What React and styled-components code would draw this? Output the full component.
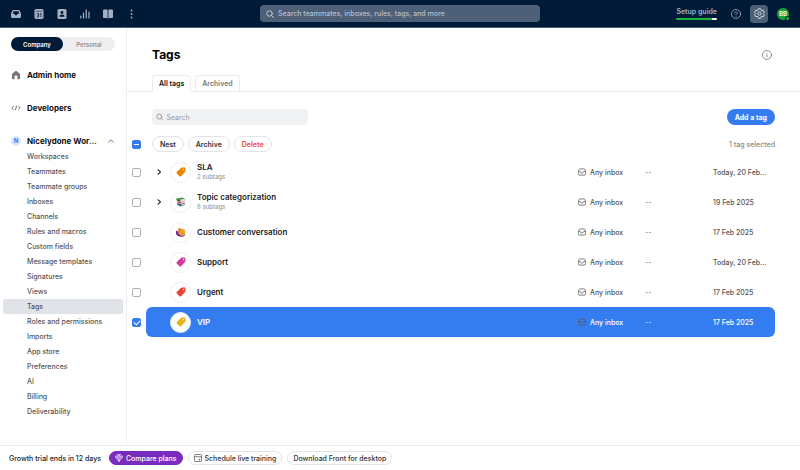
import React, { useState } from "react";
import styled, { createGlobalStyle, css } from "styled-components";

const GlobalStyle = createGlobalStyle`
  * {
    box-sizing: border-box;
  }
  body {
    margin: 0;
    font-family: Inter, "Liberation Sans", sans-serif;
    font-size: 8px;
    color: #222;
    background: #fff;
  }
  button, input {
    font-family: inherit;
    margin: 0;
  }
  button {
    cursor: pointer;
  }
`;

const menuItems = [
  "Workspaces",
  "Teammates",
  "Teammate groups",
  "Inboxes",
  "Channels",
  "Rules and macros",
  "Custom fields",
  "Message templates",
  "Signatures",
  "Views",
  "Tags",
  "Roles and permissions",
  "Imports",
  "App store",
  "Preferences",
  "AI",
  "Billing",
  "Deliverability",
];

const tags = [
  { name: "SLA", subtags: 2, color: "#f08000", date: "Today, 20 Feb…" },
  { name: "Topic categorization", subtags: 8, icon: "books", date: "19 Feb 2025" },
  { name: "Customer conversation", icon: "hand", date: "17 Feb 2025" },
  { name: "Support", color: "#cf3a9b", date: "Today, 20 Feb…" },
  { name: "Urgent", color: "#ea4335", date: "17 Feb 2025" },
  { name: "VIP", color: "#e3b21c", date: "17 Feb 2025" },
];

function InboxSolidIcon() {
  return (
    <svg width="10" height="10" viewBox="0 0 20 20" fill="#a5b1c0" aria-hidden="true">
      <path
        fillRule="evenodd"
        d="M5 2h10a3 3 0 0 1 2.500 1.500L20 9v6a3 3 0 0 1-3 3H3a3 3 0 0 1-3-3V9l2.500-5.500A3 3 0 0 1 5 2Zm0 2.500L3 9h3.500c.4 2.200 1.700 3.500 3.500 3.500s3.100-1.300 3.500-3.500H17l-2-4.500Z"
      />
    </svg>
  );
}

function CalendarSolidIcon() {
  return (
    <svg width="10" height="10" viewBox="0 0 20 20" aria-hidden="true">
      <rect x="1" y="0" width="18" height="20" rx="3" fill="#a5b1c0" />
      <path d="M3.500 4.500h13" stroke="#001b38" strokeWidth="1.200" />
      <path
        d="M5.500 9h3.700v7H5.500M6.500 12.500h2.700M12 10l2-1v7.500"
        fill="none"
        stroke="#001b38"
        strokeWidth="1.500"
      />
    </svg>
  );
}

function ContactIcon() {
  return (
    <svg width="10" height="10" viewBox="0 0 20 20" aria-hidden="true">
      <rect x="1" y="0" width="18" height="20" rx="3" fill="#a5b1c0" />
      <circle cx="10" cy="7" r="2.800" fill="#001b38" />
      <path d="M5 15.500c0-3 2-4.500 5-4.500s5 1.500 5 4.500Z" fill="#001b38" />
    </svg>
  );
}

function ChartIcon() {
  return (
    <svg width="10" height="10" viewBox="0 0 20 20" aria-hidden="true">
      <path
        d="M1.500 18v-4M7 18V8M12.500 18V1.500M18 18V6"
        stroke="#a5b1c0"
        strokeWidth="2.400"
        strokeLinecap="round"
      />
    </svg>
  );
}

function BookIcon() {
  return (
    <svg width="10" height="10" viewBox="0 0 20 20" fill="#a5b1c0" aria-hidden="true">
      <path d="M2 1h5.500A1.500 1.500 0 0 1 9.200 2.500V19L7 18H2a2 2 0 0 1-2-2V3a2 2 0 0 1 2-2ZM18 1h-5.500a1.500 1.500 0 0 0-1.700 1.500V19l2.200-1h5a2 2 0 0 0 2-2V3a2 2 0 0 0-2-2Z" />
    </svg>
  );
}

function DotsIcon() {
  return (
    <svg width="10" height="10" viewBox="0 0 20 20" fill="#a5b1c0" aria-hidden="true">
      <circle cx="11" cy="3" r="1.800" />
      <circle cx="11" cy="10" r="1.800" />
      <circle cx="11" cy="17" r="1.800" />
    </svg>
  );
}

function SearchIcon() {
  return (
    <svg
      width="8"
      height="8"
      viewBox="0 0 16 16"
      fill="none"
      stroke="currentColor"
      strokeWidth="1.700"
      strokeLinecap="round"
      aria-hidden="true"
    >
      <circle cx="7" cy="7" r="5.500" />
      <path d="m11 11 4 4" />
    </svg>
  );
}

function HelpIcon() {
  return (
    <svg
      width="10"
      height="10"
      viewBox="0 0 20 20"
      fill="none"
      stroke="#a5b1c0"
      strokeWidth="1.600"
      strokeLinecap="round"
      aria-hidden="true"
    >
      <circle cx="10" cy="10" r="9" />
      <path d="M7.500 8c0-3.500 5-3.500 5-.2 0 1.900-2.500 2-2.500 4M10 14.600v.2" />
    </svg>
  );
}

function GearIcon() {
  return (
    <svg
      width="11"
      height="11"
      viewBox="0 0 22 22"
      fill="none"
      stroke="#d3d9e0"
      strokeWidth="1.900"
      strokeLinejoin="round"
      aria-hidden="true"
    >
      <path d="M8.800 1.500h4.400l.8 2.700 1.900 1.100 2.700-.7 2.200 3.800-2 2v1.200l2 2-2.200 3.800-2.700-.7-1.900 1.100-.8 2.700H8.800L8 17.800l-1.900-1.100-2.700.7-2.200-3.800 2-2v-1.200l-2-2 2.200-3.800 2.700.7L8 4.200Z" />
      <circle cx="11" cy="11" r="3.200" />
    </svg>
  );
}

function HomeIcon() {
  return (
    <svg width="10" height="10" viewBox="0 0 20 20" fill="#757575" aria-hidden="true">
      <path d="M9 2a1.500 1.500 0 0 1 2 0l6.300 5.300a2 2 0 0 1 .7 1.500v8a1.500 1.500 0 0 1-1.500 1.500H13v-5a3 3 0 0 0-6 0v5H3.500A1.500 1.500 0 0 1 2 16.800v-8a2 2 0 0 1 .7-1.500Z" />
    </svg>
  );
}

function CodeIcon() {
  return (
    <svg
      width="10"
      height="10"
      viewBox="0 0 20 20"
      fill="none"
      stroke="#666"
      strokeWidth="1.700"
      strokeLinecap="round"
      strokeLinejoin="round"
      aria-hidden="true"
    >
      <path d="M5 6.500 1.500 10 5 13.500M15 6.500l3.500 3.500-3.500 3.500M11.500 6 8.500 14" />
    </svg>
  );
}

function ChevronIcon({ up }) {
  return (
    <svg
      width="8"
      height="8"
      viewBox="0 0 16 16"
      fill="none"
      stroke={up ? "#666" : "#333"}
      strokeWidth={up ? 1.800 : 2.200}
      strokeLinecap="round"
      strokeLinejoin="round"
      aria-hidden="true"
    >
      <path d={up ? "m3 10.500 5-5 5 5" : "m6 3.500 5 4.500L6 12.500"} />
    </svg>
  );
}

function InfoIcon() {
  return (
    <svg
      width="10"
      height="10"
      viewBox="0 0 20 20"
      fill="none"
      stroke="#777"
      strokeWidth="1.600"
      strokeLinecap="round"
      aria-hidden="true"
    >
      <circle cx="10" cy="10" r="9" />
      <path d="M10 9.500V14M10 6v.2" />
    </svg>
  );
}

function InboxIcon() {
  return (
    <svg
      width="8"
      height="8"
      viewBox="0 0 16 16"
      fill="none"
      stroke="#555"
      strokeWidth="1.500"
      strokeLinejoin="round"
      aria-hidden="true"
    >
      <path d="M4 1.800h8a2 2 0 0 1 1.800 1.300L15.200 7v4.500a2.700 2.700 0 0 1-2.700 2.700h-9A2.700 2.700 0 0 1 .8 11.500V7l1.400-3.900A2 2 0 0 1 4 1.800Z" />
      <path d="M1 7h3.500c.3 2 1.500 3 3.500 3s3.200-1 3.500-3H15" />
    </svg>
  );
}

function TagIcon({ color }) {
  return (
    <svg width="10" height="10" viewBox="0 0 20 20" fill={color} aria-hidden="true">
      <path
        fillRule="evenodd"
        d="M11.500 1.200 17.300 1a1.700 1.700 0 0 1 1.700 1.700l-.2 5.800a2.500 2.500 0 0 1-.7 1.700l-8 8.200a2.200 2.200 0 0 1-3.100 0l-5.400-5.400a2.200 2.200 0 0 1 0-3.100l8.200-8a2.500 2.500 0 0 1 1.700-.7ZM15 3.500a1.500 1.500 0 1 0 0 3 1.500 1.500 0 0 0 0-3Z"
      />
    </svg>
  );
}

function BooksIcon() {
  return (
    <svg width="10" height="10" viewBox="0 0 20 20" aria-hidden="true">
      <path d="m1 3 11-2 7 2-10 3Z" fill="#4a9a43" />
      <path d="M1 3v4l8 2V6Z" fill="#236b2b" />
      <path d="m9 6 10-3v3L9 9Z" fill="#d9dfd0" />
      <path d="m3 8 7 1.500L18 7v3l-8 3-7-2Z" fill="#c73832" />
      <path d="m10 9.500 8-2.300V10l-8 2Z" fill="#e6dedb" />
      <path d="m2 12 8 2 8-3v4l-8 4-7-3Z" fill="#3b5068" />
      <path d="m10 15 8-3v2l-8 3.500Z" fill="#d5dce1" />
    </svg>
  );
}

function HandIcon() {
  return (
    <svg width="10" height="10" viewBox="0 0 20 20" aria-hidden="true">
      <path d="M0 7c-1 5 0 9 4 11 4.500 2.500 11 2 14-1L8 11Z" fill="#7b2299" />
      <circle cx="12" cy="10" r="6.500" fill="#f0a933" />
      <path
        d="M4 5c1-3 3-4 4-3l4 3c1 2-3 9-5 9s-4-6-3-9Z"
        fill="#e39a35"
      />
      <path d="M7 14c4 3 8 3 11 0" stroke="#e29a35" strokeWidth="3" fill="none" />
      <path
        d="M11 8.500h1M15 8.500h1M11.500 11.500c1.500 1 3 1 4 0M6 4l2 4"
        stroke="#9a5a1c"
        strokeWidth="1"
        fill="none"
      />
    </svg>
  );
}

function DiamondIcon() {
  return (
    <svg
      width="8"
      height="8"
      viewBox="0 0 16 16"
      fill="none"
      stroke="#fff"
      strokeWidth="1.300"
      strokeLinejoin="round"
      aria-hidden="true"
    >
      <path d="M4 1.500h8L15.300 6 8 15 .7 6ZM.7 6h14.600M5.300 6 8 15l2.700-9M5.300 6 8 1.500 10.700 6" />
    </svg>
  );
}

function CalendarIcon() {
  return (
    <svg
      width="8"
      height="8"
      viewBox="0 0 16 16"
      fill="none"
      stroke="#444"
      strokeWidth="1.400"
      aria-hidden="true"
    >
      <rect x="1" y="1" width="14" height="14" rx="2" />
      <path d="M1 5.500h14M10 10.500h1.500V12H10Z" />
    </svg>
  );
}

function App() {
  const [selected, setSelected] = useState(["VIP"]);
  const [search, setSearch] = useState("");

  const toggleTag = (name) => {
    setSelected((prev) =>
      prev.includes(name) ? prev.filter((n) => n !== name) : [...prev, name]
    );
  };

  const toggleAll = () => {
    setSelected(selected.length ? [] : tags.map((tag) => tag.name));
  };

  return (
    <Page>
      <GlobalStyle />
      <TopBar>
        <TopNav>
          <TopButton aria-label="Inbox"><InboxSolidIcon /></TopButton>
          <TopButton aria-label="Calendar"><CalendarSolidIcon /></TopButton>
          <TopButton aria-label="Contacts"><ContactIcon /></TopButton>
          <TopButton aria-label="Analytics"><ChartIcon /></TopButton>
          <TopButton aria-label="Knowledge base"><BookIcon /></TopButton>
          <TopButton aria-label="More"><DotsIcon /></TopButton>
        </TopNav>
        <TopSearch>
          <SearchIcon />
          <input
            aria-label="Search everything"
            placeholder="Search teammates, inboxes, rules, tags, and more"
          />
        </TopSearch>
        <TopActions>
          <SetupGuide href="#setup">
            Setup guide
            <SetupProgress />
          </SetupGuide>
          <TopButton aria-label="Help"><HelpIcon /></TopButton>
          <TopButton $active aria-label="Settings"><GearIcon /></TopButton>
          <Avatar>
            BB
            <Status />
          </Avatar>
        </TopActions>
      </TopBar>

      <Body>
        <Sidebar>
          <Switcher>
            <SwitchButton $active>Company</SwitchButton>
            <SwitchButton>Personal</SwitchButton>
          </Switcher>
          <SideSection href="#home">
            <HomeIcon />
            <span>Admin home</span>
          </SideSection>
          <SideSection href="#developers">
            <CodeIcon />
            <span>Developers</span>
          </SideSection>
          <SideSection href="#workspace">
            <WorkspaceBadge>N</WorkspaceBadge>
            <span>Nicelydone Wor…</span>
            <ChevronIcon up />
          </SideSection>
          <Menu>
            {menuItems.map((item) => (
              <MenuLink key={item} href="#menu" $active={item === "Tags"}>
                {item}
              </MenuLink>
            ))}
          </Menu>
        </Sidebar>

        <Main>
          <Header>
            <Title>Tags</Title>
            <IconButton aria-label="About tags"><InfoIcon /></IconButton>
          </Header>
          <Tabs>
            <Tab $active>All tags</Tab>
            <Tab>Archived</Tab>
          </Tabs>
          <Toolbar>
            <TagSearch>
              <SearchIcon />
              <input
                aria-label="Search tags"
                placeholder="Search"
                value={search}
                onChange={(e) => setSearch(e.target.value)}
              />
            </TagSearch>
            <AddButton>Add a tag</AddButton>
          </Toolbar>
          <BulkBar>
            <Checkbox
              type="checkbox"
              aria-label="Select all tags"
              $mixed={selected.length > 0}
              checked={selected.length > 0}
              onChange={toggleAll}
            />
            <BulkActions>
              <PillButton>Nest</PillButton>
              <PillButton>Archive</PillButton>
              <PillButton $danger>Delete</PillButton>
            </BulkActions>
            <SelectedCount>
              {selected.length} {selected.length === 1 ? "tag" : "tags"} selected
            </SelectedCount>
          </BulkBar>
          <TagList>
            {tags
              .filter((tag) => tag.name.toLowerCase().includes(search.toLowerCase()))
              .map((tag) => {
                const isSelected = selected.includes(tag.name);
                return (
                  <TagItem key={tag.name}>
                    <Checkbox
                      type="checkbox"
                      aria-label={tag.name}
                      checked={isSelected}
                      onChange={() => toggleTag(tag.name)}
                    />
                    <TagRow $selected={isSelected}>
                      <Expander>
                        {tag.subtags && (
                          <IconButton aria-label={`Expand ${tag.name}`}>
                            <ChevronIcon />
                          </IconButton>
                        )}
                      </Expander>
                      <TagCircle>
                        {tag.icon === "books" && <BooksIcon />}
                        {tag.icon === "hand" && <HandIcon />}
                        {tag.color && <TagIcon color={tag.color} />}
                      </TagCircle>
                      <TagName $selected={isSelected}>
                        {tag.name}
                        {tag.subtags && <small>{tag.subtags} subtags</small>}
                      </TagName>
                      <InboxCell>
                        <InboxIcon />
                        Any inbox
                      </InboxCell>
                      <MutedCell>--</MutedCell>
                      <DateCell>{tag.date}</DateCell>
                    </TagRow>
                  </TagItem>
                );
              })}
          </TagList>
        </Main>
      </Body>

      <Footer>
        <TrialText>Growth trial ends in 12 days</TrialText>
        <FooterButton $primary>
          <DiamondIcon />
          Compare plans
        </FooterButton>
        <FooterButton>
          <CalendarIcon />
          Schedule live training
        </FooterButton>
        <FooterButton>Download Front for desktop</FooterButton>
      </Footer>
    </Page>
  );
}

const Page = styled.div`
  min-height: 100vh;
  display: flex;
  flex-direction: column;
`;

const TopBar = styled.header`
  display: grid;
  grid-template-columns: 1fr 35vw 1fr;
  align-items: center;
  height: 28px;
  padding: 0 7px;
  background: #001b38;
  border-bottom: 1px solid #4d6078;
`;

const TopNav = styled.nav`
  display: flex;
  gap: 5px;
`;

const TopButton = styled.button`
  display: flex;
  align-items: center;
  justify-content: center;
  width: 18px;
  height: 18px;
  padding: 0;
  border: none;
  border-radius: 4px;
  background: ${({ $active }) => ($active ? "#4d6078" : "transparent")};
`;

const TopSearch = styled.label`
  display: flex;
  align-items: center;
  gap: 4px;
  height: 17px;
  padding: 0 6px;
  border-radius: 4px;
  background: #4d6078;
  color: #d3d9e0;

  input {
    flex: 1;
    padding: 0;
    border: none;
    outline: none;
    background: transparent;
    font-size: 7px;
    font-weight: 500;
    color: #fff;
  }
  input::placeholder {
    color: #b4becb;
  }
`;

const TopActions = styled.div`
  display: flex;
  align-items: center;
  justify-content: flex-end;
  gap: 5px;
  padding-right: 4px;
`;

const SetupGuide = styled.a`
  margin-right: 5px;
  font-size: 7px;
  font-weight: 600;
  line-height: 10px;
  color: #a5b1c0;
  text-decoration: none;
`;

const SetupProgress = styled.div`
  height: 2px;
  margin-top: 1px;
  border-radius: 1px;
  background: linear-gradient(to right, #16b53c 88%, #fff 88%);
`;

const Avatar = styled.div`
  position: relative;
  display: flex;
  align-items: center;
  justify-content: center;
  width: 12px;
  height: 12px;
  margin-left: 4px;
  border-radius: 50%;
  background: #16a53c;
  color: #fff;
  font-size: 6px;
  font-weight: 600;
`;

const Status = styled.span`
  position: absolute;
  right: -1px;
  bottom: -1px;
  width: 5px;
  height: 5px;
  border: 1px solid #001b38;
  border-radius: 50%;
  background: #16b53c;
`;

const Body = styled.div`
  flex: 1;
  display: flex;
`;

const Sidebar = styled.aside`
  width: 127px;
  flex-shrink: 0;
  padding: 9px 3px 0;
  border-right: 1px solid #ededf0;
`;

const Switcher = styled.div`
  display: flex;
  height: 14px;
  margin: 0 8px 9px;
  border-radius: 7px;
  background: #efeff1;
`;

const SwitchButton = styled.button`
  flex: 1;
  padding: 0;
  border: none;
  border-radius: 7px;
  font-size: 6px;
  font-weight: 600;
  background: ${({ $active }) => ($active ? "#001b38" : "transparent")};
  color: ${({ $active }) => ($active ? "#fff" : "#8e8e90")};
`;

const SideSection = styled.a`
  display: flex;
  align-items: center;
  gap: 6px;
  height: 29px;
  margin-bottom: 4px;
  padding: 0 8px;
  font-size: 8px;
  font-weight: 700;
  color: #111;
  text-decoration: none;

  span {
    flex: 1;
    white-space: nowrap;
  }
  svg {
    flex-shrink: 0;
  }
`;

const WorkspaceBadge = styled.div`
  display: flex;
  align-items: center;
  justify-content: center;
  width: 10px;
  height: 10px;
  border-radius: 50%;
  background: #d5e6ff;
  color: #3b7ff0;
  font-size: 6px;
`;

const Menu = styled.nav`
  display: flex;
  flex-direction: column;
  margin-top: -10px;
`;

const MenuLink = styled.a`
  padding-left: 24px;
  border-radius: 2px;
  font-size: 7px;
  font-weight: 500;
  line-height: 15px;
  color: #555;
  text-decoration: none;
  background: ${({ $active }) => ($active ? "#e0e3e8" : "transparent")};
`;

const Main = styled.main`
  flex: 1;
  min-width: 0;
`;

const Header = styled.div`
  display: flex;
  align-items: center;
  justify-content: space-between;
  padding: 17px 27px 0 25px;
`;

const Title = styled.h1`
  margin: 0;
  font-size: 12px;
  line-height: 20px;
  font-weight: 700;
  color: #000;
`;

const IconButton = styled.button`
  display: flex;
  padding: 1px;
  border: none;
  background: transparent;
`;

const Tabs = styled.div`
  display: flex;
  gap: 4px;
  height: 27px;
  padding: 10px 25px 0;
  border-bottom: 1px solid #ececee;
`;

const Tab = styled.button`
  height: 16px;
  padding: 0 6px;
  border: 1px solid #ececee;
  border-bottom: none;
  border-radius: 4px 4px 0 0;
  background: #fff;
  font-size: 7px;
  font-weight: 600;
  color: #777;
  ${({ $active }) =>
    $active &&
    css`
      height: 17px;
      padding-bottom: 1px;
      color: #111;
    `}
`;

const Toolbar = styled.div`
  display: flex;
  align-items: center;
  justify-content: space-between;
  padding: 17px 25px 0;
`;

const TagSearch = styled.label`
  display: flex;
  align-items: center;
  gap: 3px;
  width: 25%;
  height: 16px;
  padding: 0 4px;
  border-radius: 4px;
  background: #f1f2f4;
  color: #888;

  input {
    width: 100%;
    padding: 0;
    border: none;
    outline: none;
    background: transparent;
    font-size: 7px;
  }
  input::placeholder {
    color: #999;
  }
`;

const AddButton = styled.button`
  height: 16px;
  padding: 0 8px;
  border: none;
  border-radius: 8px;
  background: #347df0;
  color: #fff;
  font-size: 7px;
  font-weight: 700;
`;

const Checkbox = styled.input`
  appearance: none;
  flex-shrink: 0;
  display: grid;
  place-items: center;
  width: 9px;
  height: 9px;
  border: 1px solid #b0b0b4;
  border-radius: 2px;
  background: #fff;

  &:checked {
    border-color: #347df0;
    background: #347df0;
  }
  &:checked::after {
    content: "";
    width: 5px;
    height: ${({ $mixed }) => ($mixed ? "1px" : "3px")};
    ${({ $mixed }) =>
      $mixed
        ? css`
            background: #fff;
          `
        : css`
            border: solid #fff;
            border-width: 0 0 1px 1px;
            transform: rotate(-45deg);
          `}
  }
`;

const BulkBar = styled.div`
  display: flex;
  align-items: center;
  padding: 11px 25px 0 5px;
`;

const BulkActions = styled.div`
  display: flex;
  gap: 4px;
  margin-left: 11px;
`;

const PillButton = styled.button`
  height: 16px;
  padding: 0 7px;
  border: 1px solid #e4e4e7;
  border-radius: 8px;
  background: #fff;
  font-size: 7px;
  font-weight: 600;
  color: ${({ $danger }) => ($danger ? "#ee4136" : "#333")};
`;

const SelectedCount = styled.span`
  margin-left: auto;
  font-size: 7px;
  font-weight: 500;
  color: #888;
`;

const TagList = styled.ul`
  margin: 5px 0 0;
  padding: 0 25px 0 5px;
  list-style: none;
`;

const TagItem = styled.li`
  display: flex;
  align-items: center;
  gap: 5px;
`;

const TagRow = styled.div`
  flex: 1;
  min-width: 0;
  display: grid;
  grid-template-columns: 24px 21px 1fr 67px 68px 62px;
  align-items: center;
  height: 30px;
  border-radius: 6px;
  font-size: 7px;
  font-weight: 500;
  color: #555;
  ${({ $selected }) =>
    $selected &&
    css`
      background: #347df0;
      color: #fff;
    `}
`;

const Expander = styled.div`
  display: flex;
  padding-left: 8px;
`;

const TagCircle = styled.div`
  display: flex;
  align-items: center;
  justify-content: center;
  width: 21px;
  height: 21px;
  border: 1px solid #f0f0f2;
  border-radius: 50%;
  background: #fff;
`;

const TagName = styled.div`
  padding-left: 6px;
  font-size: 8px;
  line-height: 10px;
  font-weight: 600;
  color: ${({ $selected }) => ($selected ? "#fff" : "#222")};

  small {
    display: block;
    font-size: 6px;
    font-weight: 500;
    color: #999;
  }
`;

const InboxCell = styled.div`
  display: flex;
  align-items: center;
  gap: 4px;
`;

const MutedCell = styled.div`
  opacity: 0.7;
`;

const DateCell = styled.div`
  white-space: nowrap;
`;

const Footer = styled.footer`
  display: flex;
  align-items: center;
  gap: 5px;
  height: 25px;
  padding: 0 9px;
  border-top: 1px solid #ececee;
`;

const TrialText = styled.span`
  margin-right: 3px;
  font-size: 7px;
  font-weight: 500;
`;

const FooterButton = styled.button`
  display: flex;
  align-items: center;
  gap: 3px;
  height: 14px;
  padding: 0 5px;
  border: 1px solid ${({ $primary }) => ($primary ? "#7a2bbf" : "#e4e4e7")};
  border-radius: 7px;
  background: ${({ $primary }) => ($primary ? "#7a2bbf" : "#fff")};
  color: ${({ $primary }) => ($primary ? "#fff" : "#333")};
  font-size: 7px;
  font-weight: 500;
`;

export default App;
